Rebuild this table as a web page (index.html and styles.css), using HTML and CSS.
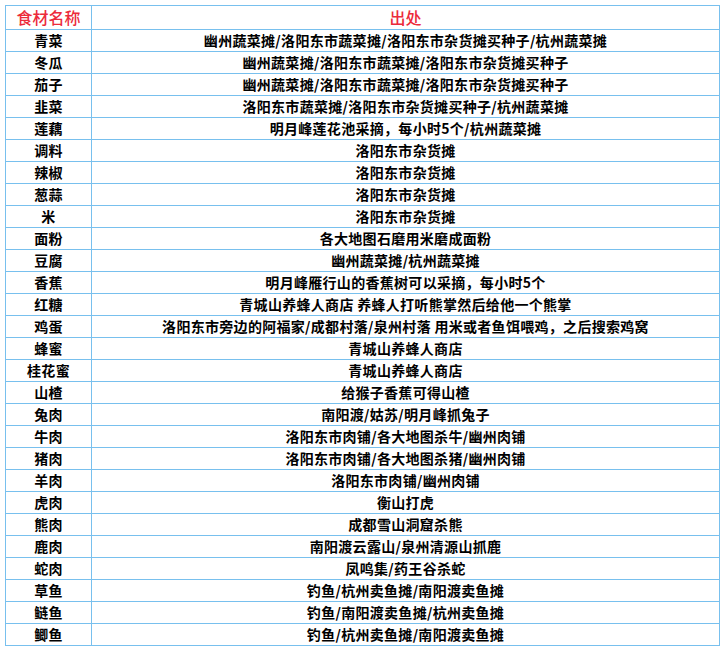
FILE: index.html
```html
<!DOCTYPE html>
<html lang="zh">
<head>
<meta charset="utf-8">
<link rel="stylesheet" href="styles.css">
</head>
<body>
<table class="food">
<colgroup><col class="c-name"><col class="c-src"></colgroup>
<thead>
<tr class="head"><th>食材名称</th><th>出处</th></tr>
</thead>
<tbody>
<tr><td>青菜</td><td>幽州蔬菜摊/洛阳东市蔬菜摊/洛阳东市杂货摊买种子/杭州蔬菜摊</td></tr>
<tr><td>冬瓜</td><td>幽州蔬菜摊/洛阳东市蔬菜摊/洛阳东市杂货摊买种子</td></tr>
<tr><td>茄子</td><td>幽州蔬菜摊/洛阳东市蔬菜摊/洛阳东市杂货摊买种子</td></tr>
<tr><td>韭菜</td><td>洛阳东市蔬菜摊/洛阳东市杂货摊买种子/杭州蔬菜摊</td></tr>
<tr><td>莲藕</td><td>明月峰莲花池采摘，每小时5个/杭州蔬菜摊</td></tr>
<tr><td>调料</td><td>洛阳东市杂货摊</td></tr>
<tr><td>辣椒</td><td>洛阳东市杂货摊</td></tr>
<tr><td>葱蒜</td><td>洛阳东市杂货摊</td></tr>
<tr><td>米</td><td>洛阳东市杂货摊</td></tr>
<tr><td>面粉</td><td>各大地图石磨用米磨成面粉</td></tr>
<tr><td>豆腐</td><td>幽州蔬菜摊/杭州蔬菜摊</td></tr>
<tr><td>香蕉</td><td>明月峰雁行山的香蕉树可以采摘，每小时5个</td></tr>
<tr><td>红糖</td><td>青城山养蜂人商店 养蜂人打听熊掌然后给他一个熊掌</td></tr>
<tr><td>鸡蛋</td><td>洛阳东市旁边的阿福家/成都村落/泉州村落 用米或者鱼饵喂鸡，之后搜索鸡窝</td></tr>
<tr><td>蜂蜜</td><td>青城山养蜂人商店</td></tr>
<tr><td>桂花蜜</td><td>青城山养蜂人商店</td></tr>
<tr><td>山楂</td><td>给猴子香蕉可得山楂</td></tr>
<tr><td>兔肉</td><td>南阳渡/姑苏/明月峰抓兔子</td></tr>
<tr><td>牛肉</td><td>洛阳东市肉铺/各大地图杀牛/幽州肉铺</td></tr>
<tr><td>猪肉</td><td>洛阳东市肉铺/各大地图杀猪/幽州肉铺</td></tr>
<tr><td>羊肉</td><td>洛阳东市肉铺/幽州肉铺</td></tr>
<tr><td>虎肉</td><td>衡山打虎</td></tr>
<tr><td>熊肉</td><td>成都雪山洞窟杀熊</td></tr>
<tr><td>鹿肉</td><td>南阳渡云露山/泉州清源山抓鹿</td></tr>
<tr><td>蛇肉</td><td>凤鸣集/药王谷杀蛇</td></tr>
<tr><td>草鱼</td><td>钓鱼/杭州卖鱼摊/南阳渡卖鱼摊</td></tr>
<tr><td>鲢鱼</td><td>钓鱼/南阳渡卖鱼摊/杭州卖鱼摊</td></tr>
<tr><td>鲫鱼</td><td>钓鱼/杭州卖鱼摊/南阳渡卖鱼摊</td></tr>
</tbody>
</table>
</body>
</html>
```
FILE: styles.css
```css
html, body {
  margin: 0;
  padding: 0;
  background: #ffffff;
}

body {
  padding: 5px 0 0 5px;
  font-family: "Noto Sans CJK SC", "Microsoft YaHei", sans-serif;
}

.food {
  border-collapse: collapse;
  width: 715px;
  table-layout: fixed;
  color: #000000;
}

.c-name { width: 86px; }

.food th,
.food td {
  border: 1px solid #78c0ee;
  padding: 0;
  text-align: center;
  vertical-align: middle;
  white-space: nowrap;
}

.food td {
  height: 21px;
  font-size: 14px;
  font-weight: 700;
  line-height: 21px;
  letter-spacing: 0.3px;
}

.head th {
  height: 23px;
  font-size: 16px;
  font-weight: 500;
  line-height: 23px;
  color: #ec2b3b;
}
```
